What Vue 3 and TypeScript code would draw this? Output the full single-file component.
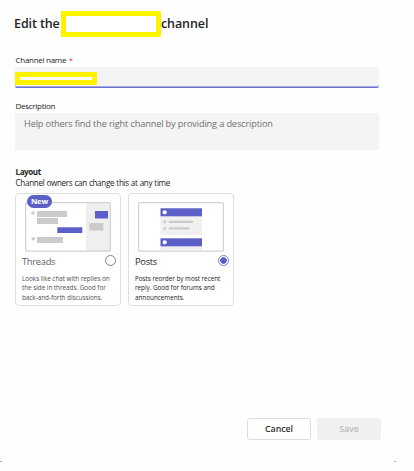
<script setup lang="ts">
import { ref } from 'vue'

type Layout = 'threads' | 'posts'

const layout = ref<Layout>('posts')
const description = ref('')
</script>

<template>
  <main class="dialog">
    <h1 class="title">
      <span class="edit">Edit the</span><span class="redacted"></span><span>channel</span>
    </h1>

    <div class="label name-label">Channel name <span class="required">*</span></div>
    <div class="name-field"><span class="name-redacted"></span></div>

    <label class="label desc-label" for="description">Description</label>
    <textarea
      id="description"
      v-model="description"
      class="description"
      placeholder="Help others find the right channel by providing a description"
    ></textarea>

    <h2 class="layout-title">Layout</h2>
    <p class="layout-note">Channel owners can change this at any time</p>

    <section class="cards">
      <article class="card threads" @click="layout = 'threads'">
        <svg class="preview" width="86" height="50" viewBox="0 0 86 50">
          <rect x="61" y="1" width="24" height="48" fill="#efefef" />
          <rect x=".6" y=".6" width="84.8" height="48.6" rx="1" fill="none" stroke="#d2d2d2" stroke-width="1.2" />
          <g fill="#cbcbcb">
            <circle cx="8" cy="11" r="1.8" />
            <rect x="12" y="9" width="30" height="6" />
            <rect x="12" y="16" width="21" height="6" />
            <circle cx="8.3" cy="36.7" r="1.8" />
            <rect x="12" y="35" width="26" height="6" />
            <rect x="64.3" y="21" width="14" height="7.5" />
          </g>
          <rect x="32.3" y="25.3" width="25" height="5.7" fill="#5b5fc7" />
          <rect x="70" y="9" width="13" height="7.5" fill="#5b5fc7" />
        </svg>
        <span class="badge">New</span>
        <div class="heading">
          <h3>Threads</h3>
          <span class="radio" :class="{ checked: layout === 'threads' }"></span>
        </div>
        <p>Looks like chat with replies on<br />the side in threads. Good for<br />back-and-forth discussions.</p>
      </article>

      <article class="card posts" @click="layout = 'posts'">
        <svg class="preview" width="86" height="50" viewBox="0 0 86 50">
          <rect x=".6" y=".6" width="84.8" height="48.6" rx="1" fill="none" stroke="#d2d2d2" stroke-width="1.2" />
          <rect x="22.5" y="6" width="41.5" height="27" fill="#f0f0f0" />
          <rect x="22.5" y="42" width="41.5" height="6.5" fill="#f0f0f0" />
          <rect x="22.5" y="6.3" width="41.5" height="8" fill="#5b5fc7" />
          <rect x="22.5" y="36.3" width="41.5" height="8" fill="#5b5fc7" />
          <circle cx="26.7" cy="10.3" r="2.1" fill="#fff" />
          <circle cx="26.7" cy="40.3" r="2.1" fill="#fff" />
          <g fill="#cbcbcb">
            <circle cx="26.7" cy="20" r="1.4" />
            <rect x="30.7" y="18.7" width="24.5" height="2.4" rx="1" />
            <circle cx="26.7" cy="26.4" r="1.4" />
            <rect x="30.7" y="25.2" width="21" height="2.4" rx="1" />
          </g>
        </svg>
        <div class="heading">
          <h3>Posts</h3>
          <span class="radio" :class="{ checked: layout === 'posts' }"></span>
        </div>
        <p>Posts reorder by most recent<br />reply. Good for forums and<br />announcements.</p>
      </article>
    </section>

    <footer class="actions">
      <button type="button" class="cancel">Cancel</button>
      <button type="button" class="save" disabled>Save</button>
    </footer>
    <div class="edge"><i></i><i></i></div>
  </main>
</template>

<style>
body {
  background: #fefefe;
}
</style>

<style scoped>
.dialog {
  box-sizing: border-box;
  width: 414px;
  height: 471px;
  padding: 11px 0 0 15px;
  overflow: hidden;
  background: #fefefe;
  color: #242424;
  font-family: "Open Sans", "Noto Sans", sans-serif;
}

h1, h2, h3, p {
  margin: 0;
}

.title {
  display: flex;
  align-items: center;
  height: 26px;
  margin-left: -1px;
  font-size: 12.5px;
  font-weight: 600;
  letter-spacing: -0.1px;
  line-height: 24px;
  white-space: nowrap;
}

.edit {
  width: 47px;
}

.redacted {
  box-sizing: border-box;
  flex: none;
  width: 100px;
  height: 26px;
  border: 5px solid #fff200;
  background: #fff;
}

.label {
  display: block;
  height: 13px;
  padding-left: 0.5px;
  font-size: 8px;
  letter-spacing: -0.28px;
  line-height: 14px;
}

.name-label {
  margin-top: 16px;
}

.required {
  margin-left: 1px;
  color: #c4314b;
  font-size: 7px;
}

.name-field {
  box-sizing: border-box;
  display: flex;
  width: 364px;
  height: 21px;
  margin-top: 1px;
  padding-top: 5px;
  border-bottom: 1px solid #6c70cd;
  border-radius: 2px;
  background: #f4f4f4;
  box-shadow: inset 0 -1px #a9abe0;
}

.name-redacted {
  box-sizing: border-box;
  width: 82px;
  height: 13px;
  border: 5px solid #fff200;
  background: #fff;
}

.desc-label {
  margin-top: 11px;
}

.description {
  box-sizing: border-box;
  display: block;
  width: 364px;
  height: 37px;
  margin: 1px 0 0;
  padding: 4px 9px;
  border: 0;
  border-radius: 2px;
  outline: 0;
  resize: none;
  overflow: hidden;
  background: #f4f4f4;
  font: 9.2px/13px "Open Sans", "Noto Sans", sans-serif;
  letter-spacing: -0.14px;
}

.description::placeholder {
  color: #707070;
  opacity: 1;
}

.layout-title {
  height: 11px;
  margin-top: 16px;
  padding-left: 0.5px;
  font-size: 8px;
  font-weight: 700;
  letter-spacing: -0.38px;
  line-height: 11px;
}

.layout-note {
  height: 11px;
  padding-left: 0.5px;
  font-size: 8.1px;
  letter-spacing: -0.31px;
  word-spacing: 0.25px;
  line-height: 11px;
  white-space: nowrap;
}

.cards {
  display: flex;
  gap: 7px;
  margin-top: 5px;
}

.card {
  position: relative;
  box-sizing: border-box;
  width: 106px;
  height: 113px;
  padding: 8px 0 0 6px;
  border: 1px solid #dedede;
  border-radius: 4px;
  background: #fff;
}

.preview {
  display: block;
  margin-left: 3px;
}

.badge {
  position: absolute;
  top: 1px;
  left: 11px;
  width: 25px;
  height: 13px;
  border-radius: 7px;
  background: #5b5fc7;
  color: #fff;
  font-size: 7.8px;
  font-weight: 700;
  letter-spacing: -0.2px;
  line-height: 13px;
  text-align: center;
}

.heading {
  display: flex;
  justify-content: space-between;
  height: 18px;
  padding-right: 4px;
}

h3 {
  padding-top: 3px;
  font-size: 9.3px;
  font-weight: 400;
  letter-spacing: -0.27px;
  line-height: 14px;
}

.threads h3 {
  color: #616161;
}

.radio {
  box-sizing: border-box;
  width: 11px;
  height: 11px;
  margin-top: 3px;
  border: 1px solid #808080;
  border-radius: 50%;
}

.radio.checked {
  border-color: #7a7dd2;
  background: radial-gradient(circle, #5b5fc7 0 3px, #fff 3.5px);
}

.card p {
  margin-top: 4px;
  font-size: 6.4px;
  letter-spacing: -0.05px;
  line-height: 9.3px;
  white-space: nowrap;
}

.threads p {
  color: #505050;
}

.actions {
  display: flex;
  gap: 6px;
  margin: 112px 0 0 232px;
}

button {
  box-sizing: border-box;
  width: 64px;
  height: 22px;
  padding: 0;
  border: 1px solid #dcdcdc;
  border-radius: 3px;
  background: #fff;
  color: #333;
  font: 600 8.9px/20px "Open Sans", "Noto Sans", sans-serif;
  letter-spacing: -0.1px;
}

.save {
  border-color: #f0f0f0;
  background: #f0f0f0;
  color: #bdbdbd;
}

.edge {
  display: flex;
  justify-content: space-between;
  width: 396px;
  margin: 21px 0 0 -15px;
}

.edge i {
  width: 2px;
  height: 1px;
  background: #aaa;
}
</style>
